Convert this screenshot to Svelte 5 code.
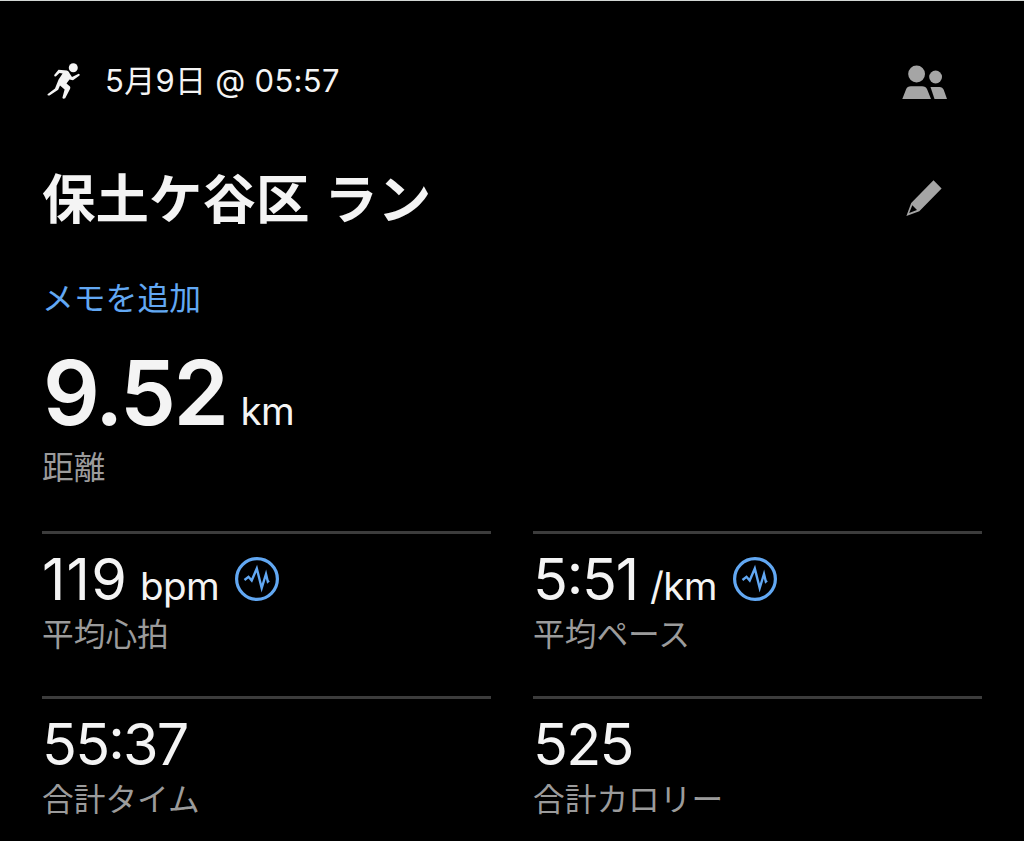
<script>
  // tracking is the letter-spacing of the value, in px
  const stats = [
    { value: "119", unit: "bpm", label: "平均心拍", tracking: 1.2, chart: true },
    { value: "5:51", unit: "/km", label: "平均ペース", tracking: -1.2, chart: true },
    { value: "55:37", label: "合計タイム", tracking: -1.8 },
    { value: "525", label: "合計カロリー", tracking: -1.7 },
  ];
</script>

<main>
  <header>
    <svg class="runner" viewBox="0 0 50 50" aria-hidden="true">
      <circle cx="33.3" cy="12.8" r="4.5" />
      <path
        d="M18.500 14.700 27 15.500Q29 16.200 30 19L32 22 38.700 18.800Q40.500 19.200 39.500 20.600L33 25.300 29.500 24.400 26.500 28.400 30 31.500Q30.700 32.600 30 34L25.200 43.300Q23 44.500 22.400 42.800L24.600 34.600 20 30.600 18.200 34.700 9.500 40.500Q7.200 41 7.500 39.200L15 33.500 18.600 24.500 22.600 18.500 19.500 18 15.800 21.600Q13.800 21.500 14.200 20z"
      />
    </svg>
    <time>5月9日 @ 05:57</time>
    <svg class="people" viewBox="0 0 46 36" aria-hidden="true">
      <circle cx="14.600" cy="9" r="8.400" />
      <circle cx="33.600" cy="12" r="6.400" />
      <path d="M.3 34 4 24.500Q5.200 21.200 9 21.200H20Q23.800 21.200 25.200 24.500L29 34z" />
      <path d="M28.500 22H37.500Q40.500 22 41.800 25L45 34H32.500z" />
    </svg>
  </header>

  <div class="title">
    <h1>保土ケ谷区 ラン</h1>
    <svg class="pencil" viewBox="0 0 36 36" aria-hidden="true">
      <path
        fill-rule="evenodd"
        d="M27.500.3 35.600 8.500 13.300 31.200.4 36 5.200 23zM6.300 25.200 3.200 33 11 30z"
      />
    </svg>
  </div>

  <a href="#memo">メモを追加</a>

  <section class="distance">
    <div class="reading"><strong>9.52</strong><span class="unit">km</span></div>
    <div class="label">距離</div>
  </section>

  <section class="stats">
    {#each stats as stat}
      <div class="stat">
        <div class="reading">
          <span class="value" style="letter-spacing: {stat.tracking}px">{stat.value}</span>
          {#if stat.unit}
            <span class="unit">{stat.unit}</span>
          {/if}
          {#if stat.chart}
            <svg class="chart" viewBox="0 0 44 44" aria-hidden="true">
              <circle cx="22" cy="22" r="20.400" />
              <path
                d="M9.500 23 13.500 19.800 16.700 23.500 21.800 11.500 26.700 31 31 17 32.800 24.500 34 23.500"
              />
            </svg>
          {/if}
        </div>
        <div class="label">{stat.label}</div>
      </div>
    {/each}
  </section>
</main>

<style>
  :global(body) {
    margin: 0;
    background: #000;
  }

  main {
    box-sizing: border-box;
    height: 841px;
    padding: 0 42px;
    overflow: hidden;
    border-top: 1px solid #d2d6d4;
    background: #000;
    color: #f4f4f4;
    font-family: Inter, "Noto Sans CJK JP", sans-serif;
    white-space: nowrap;
  }

  header {
    display: flex;
    align-items: center;
    height: 64px;
    padding: 47px 34px 0 0;
  }

  .runner {
    width: 50px;
    height: 50px;
    margin-left: -2px;
    fill: #f4f4f4;
  }

  time {
    margin: 0 0 3px 15px;
    font-size: 31px;
    letter-spacing: 0.3px;
  }

  .people {
    width: 46px;
    height: 36px;
    margin: 5px 0 0 auto;
    fill: #a5a5a5;
  }

  .title {
    display: flex;
    align-items: center;
    justify-content: space-between;
    height: 80px;
    margin-top: 47px;
    padding-right: 40px;
  }

  h1 {
    margin: 2px 0 0;
    font-size: 53.4px;
    font-weight: 700;
    line-height: 80px;
    letter-spacing: 0.1px;
    word-spacing: 2px;
  }

  .pencil {
    width: 36px;
    height: 36px;
    margin-top: -2px;
    fill: #a5a5a5;
  }

  a {
    display: block;
    height: 47px;
    margin-top: 36px;
    color: #62a8f3;
    font-size: 31.8px;
    line-height: 48px;
    text-decoration: none;
  }

  .reading {
    display: flex;
    align-items: baseline;
  }

  .distance {
    height: 209px;
  }

  .distance .reading {
    height: 126px;
    padding-left: 1px;
    line-height: 142px;
  }

  strong {
    font-size: 89px;
    font-weight: 600;
    letter-spacing: -2.5px;
  }

  .unit {
    margin-left: 12px;
    font-size: 38.5px;
    letter-spacing: -0.6px;
  }

  .distance .unit {
    margin-left: 14px;
  }

  .label {
    color: #9b9b9b;
    font-size: 31.7px;
    line-height: 40px;
  }

  .stats {
    display: grid;
    grid-template-columns: 1fr 1fr;
    grid-auto-rows: 165px;
    column-gap: 42px;
  }

  .stat {
    border-top: 3px solid #3c3c3c;
  }

  .stat .reading {
    height: 81px;
    line-height: 91px;
  }

  .value {
    font-size: 57.5px;
    font-feature-settings: "case";
  }

  .chart {
    align-self: flex-start;
    width: 44px;
    height: 44px;
    margin: 23px 0 0 16px;
    fill: none;
    stroke: #62a8f3;
    stroke-width: 3.200;
  }

  .chart path {
    stroke-width: 2.4;
  }
</style>
